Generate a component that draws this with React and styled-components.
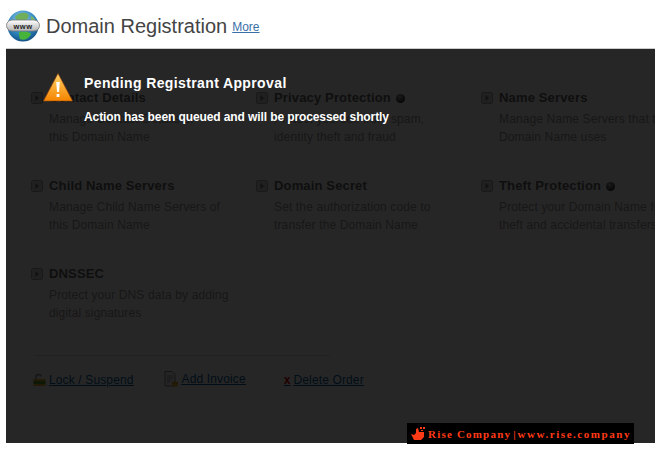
import React from 'react';
import styled, { createGlobalStyle } from 'styled-components';

const GlobalStyle = createGlobalStyle`
  html, body {
    margin: 0;
    padding: 0;
    background: #ffffff;
    font-family: "Liberation Sans", Arial, sans-serif;
  }
  #root {
    width: 655px;
    height: 457px;
    overflow: hidden;
  }
`;

const Page = styled.div`
  position: relative;
  width: 655px;
  height: 457px;
  background: #ffffff;
  overflow: hidden;
`;

const Header = styled.header`
  display: flex;
  align-items: center;
  height: 48px;
  padding: 4px 0 0 6px;
  box-sizing: border-box;
`;

const Title = styled.h1`
  margin: 0 0 0 6px;
  font-size: 20px;
  font-weight: 400;
  color: #444444;
  white-space: nowrap;
`;

const MoreLink = styled.a`
  margin: 2px 0 0 5px;
  font-size: 12px;
  color: #3a6fa8;
  text-decoration: underline;
`;

const Panel = styled.main`
  position: relative;
  margin-left: 6px;
  height: 395px;
  box-sizing: border-box;
  border-top: 1px solid #cccccc;
  padding: 41px 0 0 25px;
`;

const OptionGrid = styled.div`
  display: grid;
  grid-template-columns: repeat(3, 225px);
  grid-auto-rows: 88px;
`;

const Option = styled.div`
  display: flex;
  gap: 6px;
`;

const OptionIcon = styled.svg`
  width: 12px;
  height: 12px;
  margin-top: 2px;
  flex: none;
`;

const OptionBody = styled.div`
  min-width: 0;
`;

const OptionTitle = styled.div`
  display: flex;
  align-items: center;
  gap: 5px;
  font-size: 13px;
  line-height: 16px;
  font-weight: 700;
  letter-spacing: 0.15px;
  color: #666666;
  white-space: nowrap;
`;

const Ball = styled.span`
  width: 9px;
  height: 9px;
  border-radius: 50%;
  background: radial-gradient(circle at 40% 30%, #aaaaaa, #222222 80%);
`;

const OptionText = styled.p`
  margin: 4px 0 0;
  font-size: 12px;
  line-height: 18px;
  color: #999999;
  white-space: nowrap;
  letter-spacing: 0.13px;
`;

const Actions = styled.div`
  width: 295px;
  margin: 1px 0 0 4px;
  border-top: 1px solid #dddddd;
  padding-top: 16px;
  display: flex;
  align-items: center;
  white-space: nowrap;
`;

const Action = styled.a`
  display: flex;
  align-items: center;
  gap: ${p => p.$gap || 3}px;
  margin-right: ${p => p.$after || 0}px;
  transform: translateY(${p => p.$shift || 0}px);
  font-size: 12px;
  color: #0a5fa0;
  letter-spacing: 0.13px;

  span {
    text-decoration: underline;
  }
`;

const LockSlot = styled.span`
  display: flex;
  margin-left: -2px;
`;

const DeleteMark = styled.b`
  color: #dd0000;
  font-size: 12px;
`;

const Overlay = styled.div`
  position: absolute;
  inset: 0;
  background: rgba(0, 0, 0, 0.85);
  padding: 24px 0 0 37px;
  box-sizing: border-box;
`;

const Alert = styled.div`
  display: flex;
  gap: 11px;
  color: #ffffff;
`;

const AlertBody = styled.div`
  padding-top: 1px;
`;

const AlertTitle = styled.div`
  font-size: 14px;
  line-height: 18px;
  font-weight: 700;
  letter-spacing: 0.38px;
`;

const AlertText = styled.div`
  margin-top: 16px;
  font-size: 12px;
  line-height: 18px;
  font-weight: 700;
  letter-spacing: -0.1px;
`;

const Watermark = styled.div`
  position: absolute;
  left: 407px;
  top: 423px;
  width: 227px;
  height: 21px;
  background: #000000;
  color: #ff3a17;
  display: flex;
  align-items: center;
  padding-left: 3px;
  box-sizing: border-box;
  font-family: "Liberation Serif", "Times New Roman", serif;
  font-size: 11px;
  font-weight: 700;
  white-space: nowrap;
`;

const WatermarkText = styled.span`
  margin-left: ${p => p.$left}px;
  letter-spacing: ${p => p.$spacing}px;
`;

const Arrow = () => (
  <OptionIcon viewBox="0 0 12 12">
    <rect x="0.5" y="0.5" width="11" height="11" rx="1.5" fill="#d8d8d8" stroke="#aaaaaa" />
    <path d="M4.5 3 L8 6 L4.5 9 Z" fill="#777777" />
  </OptionIcon>
);

const Globe = () => (
  <svg width="34" height="34" viewBox="0 0 34 34">
    <defs>
      <radialGradient id="sea" cx="0.45" cy="0.3" r="0.8">
        <stop offset="0" stopColor="#8fd0ee" />
        <stop offset="0.6" stopColor="#2a7fb8" />
        <stop offset="1" stopColor="#0c3f70" />
      </radialGradient>
      <linearGradient id="pill" x1="0" y1="0" x2="0" y2="1">
        <stop offset="0" stopColor="#ffffff" />
        <stop offset="1" stopColor="#b5b5b5" />
      </linearGradient>
    </defs>
    <circle cx="17" cy="17" r="15.5" fill="url(#sea)" />
    <path d="M9 8 C13 3 19 3 22 5 C24 9 20 11 17 12 C14 13 10 12 9 8 Z" fill="#6fae5a" />
    <path d="M25 7 C29 9 31 13 31 16 L25 15 Z" fill="#7cb868" />
    <path d="M13 23 C18 22 24 23 25 25 C23 30 17 32 14 30 C13 28 13 25 13 23 Z" fill="#46b33a" />
    <rect x="0.5" y="11" width="33" height="11" rx="5.5" fill="url(#pill)" stroke="#777777" strokeWidth="0.8" />
    <text x="17" y="19.5" textAnchor="middle" fontFamily="Liberation Sans" fontSize="7.5" fontWeight="700" letterSpacing="0.5" fill="#222222">www</text>
  </svg>
);

const Warning = () => (
  <svg width="30" height="29" viewBox="0 0 30 29">
    <defs>
      <linearGradient id="warn" x1="0" y1="0" x2="0" y2="1">
        <stop offset="0" stopColor="#ffd268" />
        <stop offset="1" stopColor="#f58400" />
      </linearGradient>
    </defs>
    <path d="M15 0.5 L29.5 28 L0.5 28 Z" fill="url(#warn)" stroke="#9c4a10" strokeWidth="0.6" strokeLinejoin="round" />
    <path d="M13.2 9 L16.8 9 L16 19 L14 19 Z" fill="#ffffff" />
    <rect x="13.6" y="21" width="2.8" height="3" fill="#ffffff" />
  </svg>
);

const LockIcon = () => (
  <svg width="13" height="14" viewBox="0 0 13 14">
    <path d="M3 6 V3.5 C3 1 8 1 8 3.5" fill="none" stroke="#999999" strokeWidth="1.6" />
    <rect x="0.5" y="6" width="12" height="7" fill="#e8b030" />
    <rect x="0.5" y="8" width="12" height="3" fill="#5f9f30" />
  </svg>
);

const InvoiceIcon = () => (
  <svg width="15" height="16" viewBox="0 0 15 16">
    <path d="M1 0.5 H8 L11 3.5 V15 H1 Z" fill="#f4f4f4" stroke="#888888" />
    <path d="M3 5 H9 M3 7 H9 M3 9 H7 M3 11 H6" stroke="#999999" />
    <ellipse cx="11" cy="12" rx="3.2" ry="1.5" fill="#d9a520" />
    <ellipse cx="11" cy="14" rx="3.2" ry="1.5" fill="#e8b830" />
  </svg>
);

const RiseMark = () => (
  <svg width="16" height="15" viewBox="0 0 16 15">
    <path d="M1 8 L4 9 L6 7 L6 3 L8 2 L9 6 L14 6 L14 11 L11 14 L4 14 Z" fill="#ff3a17" />
    <rect x="10" y="1" width="2" height="2" fill="#ff3a17" />
    <rect x="13" y="1" width="2" height="2" fill="#ff3a17" />
    <rect x="11" y="4" width="2" height="1" fill="#ff3a17" />
  </svg>
);

const options = [
  { title: 'Contact Details', lines: ['Manage Contact Details of', 'this Domain Name'] },
  { title: 'Privacy Protection', ball: true, lines: ['Protect yourself from spam,', 'identity theft and fraud'] },
  { title: 'Name Servers', lines: ['Manage Name Servers that this', 'Domain Name uses'] },
  { title: 'Child Name Servers', lines: ['Manage Child Name Servers of', 'this Domain Name'] },
  { title: 'Domain Secret', lines: ['Set the authorization code to', 'transfer the Domain Name'] },
  { title: 'Theft Protection', ball: true, lines: ['Protect your Domain Name from', 'theft and accidental transfers'] },
  { title: 'DNSSEC', lines: ['Protect your DNS data by adding', 'digital signatures'] },
];

export default function App() {
  return (
    <Page>
      <GlobalStyle />
      <Header>
        <Globe />
        <Title>Domain Registration</Title>
        <MoreLink href="#">More</MoreLink>
      </Header>
      <Panel>
        <OptionGrid>
          {options.map(option => (
            <Option key={option.title}>
              <Arrow />
              <OptionBody>
                <OptionTitle>
                  {option.title}
                  {option.ball && <Ball />}
                </OptionTitle>
                <OptionText>
                  {option.lines[0]}
                  <br />
                  {option.lines[1]}
                </OptionText>
              </OptionBody>
            </Option>
          ))}
        </OptionGrid>
        <Actions>
          <Action href="#" $after={30}>
            <LockSlot>
              <LockIcon />
            </LockSlot>
            <span>Lock / Suspend</span>
          </Action>
          <Action href="#" $after={38} $shift={-1}>
            <InvoiceIcon />
            <span>Add Invoice</span>
          </Action>
          <Action href="#">
            <DeleteMark>x</DeleteMark>
            <span>Delete Order</span>
          </Action>
        </Actions>
        <Overlay>
          <Alert>
            <Warning />
            <AlertBody>
              <AlertTitle>Pending Registrant Approval</AlertTitle>
              <AlertText>Action has been queued and will be processed shortly</AlertText>
            </AlertBody>
          </Alert>
        </Overlay>
      </Panel>
      <Watermark>
        <RiseMark />
        <WatermarkText $left={2} $spacing={1.2}>Rise Company</WatermarkText>
        <WatermarkText $left={2} $spacing={0}>|</WatermarkText>
        <WatermarkText $left={2} $spacing={1.55}>www.rise.company</WatermarkText>
      </Watermark>
    </Page>
  );
}
